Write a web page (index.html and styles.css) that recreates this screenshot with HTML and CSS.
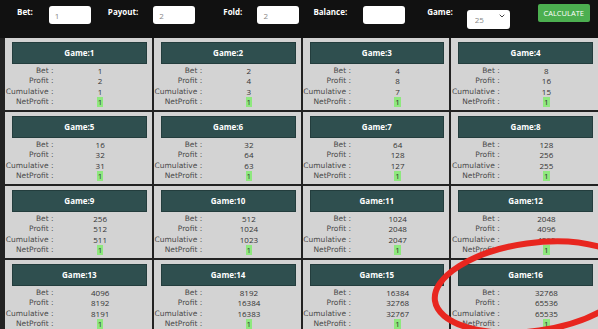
FILE: index.html
```html
<!DOCTYPE html>
<html>
<head>
<meta charset="utf-8">
<link rel="stylesheet" href="styles.css">
</head>
<body>
<div class="topbar">
  <div class="field f1"><label>Bet:</label><input class="inp" value="1"></div>
  <div class="field f2"><label>Payout:</label><input class="inp" value="2"></div>
  <div class="field f3"><label>Fold:</label><input class="inp" value="2"></div>
  <div class="field f4"><label>Balance:</label><input class="inp" value=""></div>
  <div class="field f5"><label>Game:</label>
    <div class="selwrap"><select class="sel"><option>25</option></select>
      <svg class="chev" width="6" height="4" viewBox="0 0 6 4"><path d="M0.7 0.7 L3 3 L5.3 0.7" fill="none" stroke="#444" stroke-width="1"/></svg>
    </div>
  </div>
  <button class="calc">CALCULATE</button>
</div>
<div class="grid" id="grid"></div>
<svg class="circle" width="598" height="329" viewBox="0 0 598 329">
  <ellipse cx="533" cy="287" rx="99" ry="44" transform="rotate(-8 533 287)" fill="none" stroke="#e8261f" stroke-width="6"/>
</svg>
<script>
  var g = document.getElementById('grid');
  var html = '';
  for (var i = 1; i <= 16; i++) {
    var bet = Math.pow(2, i - 1), profit = Math.pow(2, i), cum = profit - 1;
    html += '<div class="cell"><div class="head">Game:' + i + '</div>' +
      '<div class="row"><span class="lbl">Bet :</span><span class="val">' + bet + '</span></div>' +
      '<div class="row"><span class="lbl">Profit :</span><span class="val">' + profit + '</span></div>' +
      '<div class="row"><span class="lbl">Cumulative :</span><span class="val">' + cum + '</span></div>' +
      '<div class="row"><span class="lbl">NetProfit :</span><span class="val"><span class="net">1</span></span></div>' +
      '</div>';
  }
  g.innerHTML = html;
</script>
</body>
</html>
```
FILE: styles.css
```css
html, body {
  margin: 0;
  padding: 0;
  background: #111;
  overflow: hidden;
}
body {
  width: 598px;
  height: 329px;
  position: relative;
  font-family: "Open Sans", "Liberation Sans", sans-serif;
}
.topbar {
  height: 38px;
  display: flex;
  align-items: flex-start;
  padding-top: 5px;
  box-sizing: border-box;
}
.field {
  display: flex;
  align-items: flex-start;
  gap: 15px;
}
.field label {
  color: #fff;
  font-weight: 700;
  font-size: 8px;
  line-height: 12px;
  margin-top: 1px;
}
.f1 { margin-left: 17px; gap: 16px; }
.f2 { margin-left: 17px; }
.f3 { margin-left: 28px; }
.f4 { margin-left: 14px; gap: 16px; }
.f5 { margin-left: 22px; gap: 14px; }
.inp {
  width: 42px;
  height: 18px;
  box-sizing: border-box;
  border: none;
  border-radius: 3px;
  background: #fff;
  padding: 0 0 0 6px;
  margin-top: 1px;
  font-family: "Open Sans", sans-serif;
  font-size: 8px;
  color: #888;
  outline: none;
}
.selwrap {
  position: relative;
  width: 43px;
  height: 19px;
  margin-top: 1px;
}
.sel {
  appearance: none;
  -webkit-appearance: none;
  width: 43px;
  height: 19px;
  border: none;
  border-radius: 3px;
  background: #fff;
  padding: 1px 0 0 8px;
  font-family: "Open Sans", sans-serif;
  font-size: 8px;
  color: #888;
  outline: none;
}
.chev {
  position: absolute;
  right: 5px;
  top: 8px;
}
.calc {
  margin-left: 28px;
  margin-top: -1px;
  width: 52px;
  height: 18px;
  background: #4caf50;
  color: #fff;
  border: none;
  border-radius: 2px;
  font-family: "Open Sans", sans-serif;
  font-size: 7.5px;
  padding: 0;
}
.grid {
  display: grid;
  grid-template-columns: repeat(4, 146.75px);
  gap: 2px;
  padding-left: 5px;
  background: #222;
}
.cell {
  background: #d3d3d3;
  height: 72px;
  padding: 4px 5px 0 7px;
  box-sizing: border-box;
  position: relative;
}
.head {
  background: #2f4f4f;
  height: 22px;
  color: #fff;
  font-weight: 700;
  font-size: 8px;
  line-height: 22px;
  text-align: center;
  margin-bottom: 1.5px;
  box-shadow: inset 0 0 0 1px #233d3d;
}
.row {
  display: flex;
  height: 10.6px;
  line-height: 10.6px;
  font-size: 8px;
  color: #444;
  margin-left: -7px;
}
.lbl {
  width: 50px;
  text-align: right;
  font-family: "DejaVu Sans", sans-serif;
  font-size: 7.5px;
  color: #4a4a4a;
}
.val {
  width: 96px;
  text-align: center;
  font-family: "Open Sans", sans-serif;
  color: #333;
}
.net {
  background: #8ee87e;
  padding: 0 1px;
  display: inline-block;
  line-height: 10px;
}
.circle {
  position: absolute;
  left: 0;
  top: 0;
  pointer-events: none;
}
```
